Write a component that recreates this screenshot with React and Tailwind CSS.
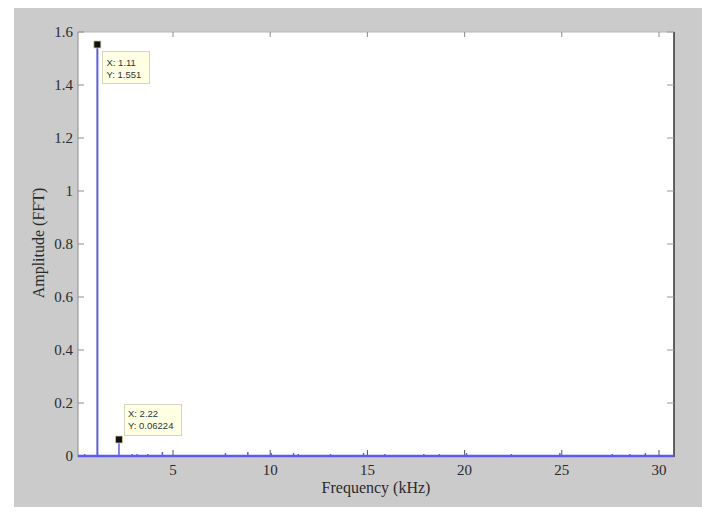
const X0 = 61.8;
const XS = 19.44;
const Y0 = 448;
const YS = 265;

const xp = (v) => X0 + v * XS;
const yp = (v) => Y0 - v * YS;

const yTicks = [0, 0.2, 0.4, 0.6, 0.8, 1, 1.2, 1.4, 1.6];
const xTicks = [5, 10, 15, 20, 25, 30];

// small leftover bins along the baseline
const blips = [
  [0.45, 2], [2.9, 2], [3.15, 2], [3.7, 2], [4.45, 4], [7.7, 3], [8.85, 4], [10.05, 3],
  [11.2, 3], [11.45, 2], [13.1, 2], [14.8, 3], [15.9, 2], [17.9, 2], [18.7, 2], [20.1, 3],
  [22.4, 2], [24.9, 3], [27.6, 2], [28.5, 2], [29.3, 3],
];

function Chart() {
  return (
    <svg width="688" height="499" viewBox="0 0 688 499" className="block">
      <rect x="64" y="24" width="596" height="424" fill="#ffffff" />
      <line x1="64" y1="24" x2="660" y2="24" stroke="#b4b4b4" strokeWidth="1" />
      <line x1="64" y1="24" x2="64" y2="449" stroke="#8c8c8c" strokeWidth="1" />
      <line x1="660" y1="24" x2="660" y2="449" stroke="#333333" strokeWidth="1.5" />

      {yTicks.map((t) => (
        <g key={t}>
          <line x1="64" y1={yp(t)} x2="70" y2={yp(t)} stroke="#8c8c8c" strokeWidth="1" />
          <line x1="653" y1={yp(t)} x2="660" y2={yp(t)} stroke="#9a9a9a" strokeWidth="1" />
          <text x="59" y={yp(t) + 5} textAnchor="end" fontSize="15" fill="#2a2a2a" fontFamily="'Liberation Serif', serif">
            {t}
          </text>
        </g>
      ))}

      {xTicks.map((t) => (
        <g key={t}>
          <line x1={xp(t)} y1="24" x2={xp(t)} y2="29" stroke="#8c8c8c" strokeWidth="1" />
          <line x1={xp(t)} y1="442" x2={xp(t)} y2="448" stroke="#555" strokeWidth="1" />
          <text x={xp(t)} y="467" textAnchor="middle" fontSize="15" fill="#2a2a2a" fontFamily="'Liberation Serif', serif">
            {t}
          </text>
        </g>
      ))}

      {blips.map(([v, h]) => (
        <line key={v} x1={xp(v)} y1={Y0 - h} x2={xp(v)} y2={Y0} stroke="#5b5bef" strokeWidth="1.5" />
      ))}
      <line x1="64" y1={Y0} x2="660" y2={Y0} stroke="#5b5bef" strokeWidth="2.5" />
      <line x1={xp(1.11)} y1={yp(1.551)} x2={xp(1.11)} y2={Y0} stroke="#5b5bef" strokeWidth="2" />
      <line x1={xp(2.22)} y1={yp(0.06224)} x2={xp(2.22)} y2={Y0} stroke="#5b5bef" strokeWidth="1.5" />

      <rect x={xp(1.11) - 3.5} y={yp(1.551) - 4} width="7" height="7" fill="#111" stroke="#d8d0a0" strokeWidth="0.8" />
      <rect x={xp(2.22) - 3.5} y={yp(0.06224) - 3.5} width="7" height="7" fill="#111" stroke="#d8d0a0" strokeWidth="0.8" />

      <rect x="88.5" y="43.5" width="47" height="32" fill="#ffffe4" stroke="#d6d6c0" strokeWidth="1" />
      <text x="92.5" y="58" fontSize="9.5" fill="#333" fontFamily="'Liberation Sans', sans-serif">X: 1.11</text>
      <text x="92.5" y="69.5" fontSize="9.5" fill="#333" fontFamily="'Liberation Sans', sans-serif">Y: 1.551</text>

      <rect x="110.5" y="396.5" width="57" height="31" fill="#ffffe4" stroke="#d6d6c0" strokeWidth="1" />
      <text x="114" y="409" fontSize="9.5" fill="#333" fontFamily="'Liberation Sans', sans-serif">X: 2.22</text>
      <text x="114" y="420.5" fontSize="9.5" fill="#333" fontFamily="'Liberation Sans', sans-serif">Y: 0.06224</text>

      <text
        x="26"
        y="235"
        transform="rotate(-90 26 235)"
        textAnchor="middle"
        dominantBaseline="middle"
        fontSize="16"
        fill="#2a2a2a"
        fontFamily="'Liberation Serif', serif"
      >
        Amplitude (FFT)
      </text>
      <text x="362" y="485" textAnchor="middle" fontSize="16" fill="#2a2a2a" fontFamily="'Liberation Serif', serif">
        Frequency (kHz)
      </text>
    </svg>
  );
}

export default function App() {
  return (
    <div className="w-[711px] h-[514px] bg-white pt-[8px] pl-[14px]">
      <div className="w-[688px] h-[499px] bg-[#cbcbcb]">
        <Chart />
      </div>
    </div>
  );
}
